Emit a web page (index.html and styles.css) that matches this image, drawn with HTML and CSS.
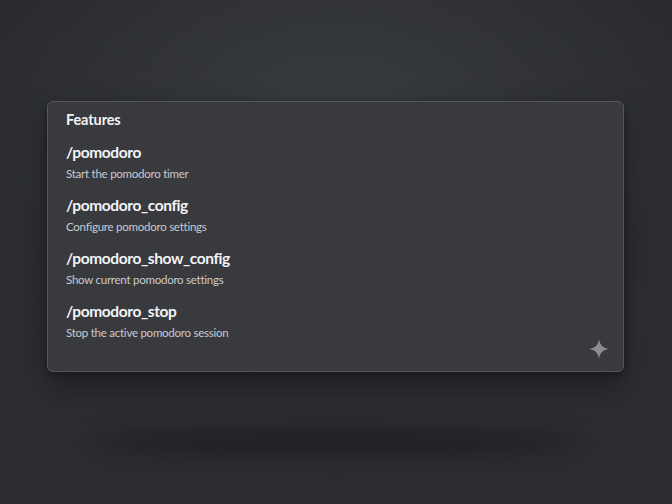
FILE: index.html
```html
<!DOCTYPE html>
<html lang="en">

<head>
    <meta charset="UTF-8">
    <meta name="viewport" content="width=device-width, initial-scale=1.0">
    <title>Features</title>
    <link rel="stylesheet" href="styles.css">
</head>

<body>

    <div class="stage">
        <div class="card">
            <h3 class="card-title">Features</h3>
            <div class="command-list">
                <div class="command">
                    <div class="command-name">/pomodoro</div>
                    <div class="command-desc">Start the pomodoro timer</div>
                </div>
                <div class="command">
                    <div class="command-name">/pomodoro_config</div>
                    <div class="command-desc">Configure pomodoro settings</div>
                </div>
                <div class="command">
                    <div class="command-name">/pomodoro_show_config</div>
                    <div class="command-desc">Show current pomodoro settings</div>
                </div>
                <div class="command">
                    <div class="command-name">/pomodoro_stop</div>
                    <div class="command-desc">Stop the active pomodoro session</div>
                </div>
            </div>
            <!-- sparkle in the corner -->
            <svg class="sparkle" width="22" height="22" viewBox="0 0 20 20">
                <path d="M10 1 C10.8 6.5 13.5 9.2 19 10 C13.5 10.8 10.8 13.5 10 19 C9.2 13.5 6.5 10.8 1 10 C6.5 9.2 9.2 6.5 10 1 Z" fill="#8d8e92" />
            </svg>
        </div>
        <div class="floor-shadow"></div>
    </div>

</body>

</html>
```

FILE: styles.css
```css
html, body {
    margin: 0;
    height: 100%;
}
body {
    font-family: Lato, "Noto Sans", sans-serif;
    background:
        radial-gradient(ellipse 55% 45% at 50% 22%, #383b3f 0%, rgba(56, 59, 63, 0) 100%),
        linear-gradient(#2a2b2e, #2c2e31 60%, #2b2d30);
    overflow: hidden;
}
.stage {
    padding: 101px 48px 0 47px;
}
.card {
    position: relative;
    height: 251px;
    padding: 9px 19px 9px 18px;
    background: #393a3e;
    border: 1px solid #55575b;
    border-radius: 6px;
    box-shadow: 0 14px 30px rgba(0, 0, 0, 0.35), 0 2px 6px rgba(0, 0, 0, 0.3);
}
.card-title {
    margin: 0 0 13px;
    font-size: 14.5px;
    line-height: 18px;
    font-weight: 700;
    color: #f2f3f5;
    letter-spacing: -0.1px;
}
.command-list {
    display: flex;
    flex-direction: column;
    gap: 13px;
}
.command-name {
    font-size: 15.5px;
    line-height: 20px;
    font-weight: 700;
    color: #f2f3f5;
    margin-bottom: 4px;
    letter-spacing: -0.4px;
}
.command-desc {
    font-size: 11.5px;
    line-height: 16px;
    color: #c9cbcf;
    letter-spacing: -0.25px;
}
.sparkle {
    position: absolute;
    right: 13px;
    bottom: 11px;
}
.floor-shadow {
    margin: 58px auto 0;
    width: 500px;
    height: 24px;
    border-radius: 50%;
    background: rgba(18, 19, 20, 0.55);
    filter: blur(11px);
}
```
